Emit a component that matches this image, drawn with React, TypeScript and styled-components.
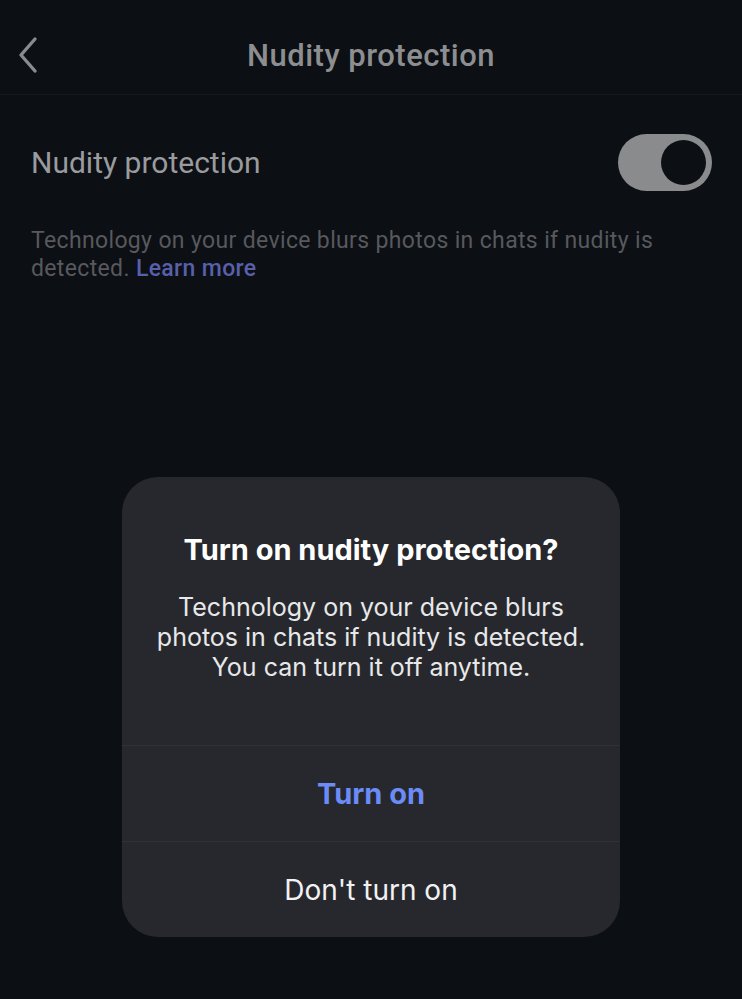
import React from "react";
import styled, { createGlobalStyle } from "styled-components";

const GlobalStyle = createGlobalStyle`
  html, body {
    margin: 0;
    padding: 0;
    background: #0c0f14;
  }
  body {
    font-family: Inter, "Noto Sans", sans-serif;
    -webkit-font-smoothing: antialiased;
  }
`;

const Screen = styled.div`
  position: relative;
  width: 742px;
  height: 999px;
  background: #0c0f14;
  overflow: hidden;
`;

const Header = styled.header`
  height: 95px;
  display: flex;
  align-items: center;
  justify-content: center;
  position: relative;
  padding-top: 16px;
  border-bottom: 1px solid #15181d;
  box-sizing: border-box;
`;

const BackButton = styled.button`
  position: absolute;
  left: 14px;
  top: 36px;
  width: 28px;
  height: 38px;
  padding: 0;
  border: none;
  background: none;
  display: flex;
  align-items: center;
  justify-content: center;
`;

const Title = styled.h1`
  margin: 0;
  font-family: Roboto, "Noto Sans", sans-serif;
  font-size: 31px;
  font-weight: 500;
  color: #8d8e90;
  letter-spacing: 0.5px;
`;

const Content = styled.div`
  padding: 39px 30px 0 31px;
`;

const SettingRow = styled.div`
  display: flex;
  align-items: center;
  justify-content: space-between;
  height: 57px;
`;

const SettingLabel = styled.span`
  font-family: Roboto, "Noto Sans", sans-serif;
  font-size: 30px;
  font-weight: 400;
  color: #9a9b9e;
`;

const Toggle = styled.div`
  width: 94px;
  height: 57px;
  border-radius: 29px;
  background: #8a8b8d;
  display: flex;
  align-items: center;
  justify-content: flex-end;
  padding-right: 6px;
  box-sizing: border-box;
`;

const Knob = styled.div`
  width: 45px;
  height: 45px;
  border-radius: 50%;
  background: #0c0f14;
`;

const Description = styled.p`
  margin: 36px 0 0;
  font-family: Roboto, "Noto Sans", sans-serif;
  font-size: 23px;
  line-height: 28px;
  letter-spacing: 0.35px;
  color: #57595d;
`;

const LearnMore = styled.a`
  color: #5860ab;
  font-weight: 500;
  text-decoration: none;
`;

const Dialog = styled.div`
  position: absolute;
  left: 122px;
  top: 477px;
  width: 498px;
  height: 460px;
  background: #26282d;
  border-radius: 36px;
  display: flex;
  flex-direction: column;
  overflow: hidden;
`;

const DialogBody = styled.div`
  flex: 1;
  display: flex;
  flex-direction: column;
  align-items: center;
  padding: 55px 16px 0;
  text-align: center;
`;

const DialogTitle = styled.h2`
  margin: 0;
  font-size: 29px;
  line-height: 35px;
  font-weight: 700;
  color: #ffffff;
  letter-spacing: 0;
`;

const DialogText = styled.p`
  margin: 25px 0 0;
  font-size: 25px;
  line-height: 30px;
  color: #e8e8ea;
  font-weight: 400;
`;

const DialogButton = styled.button<{ $primary?: boolean }>`
  height: 96px;
  border: none;
  border-top: 1px solid #303238;
  background: none;
  font-family: Inter, "Noto Sans", sans-serif;
  font-size: ${(p) => (p.$primary ? "29px" : "28px")};
  font-weight: ${(p) => (p.$primary ? 700 : 400)};
  color: ${(p) => (p.$primary ? "#6b8cf6" : "#f2f2f4")};
  padding: 0;
  cursor: pointer;
`;

export default function App() {
  return (
    <Screen>
      <GlobalStyle />
      <Header>
        <BackButton aria-label="Back">
          <svg width="24" height="38" viewBox="0 0 24 38" fill="none">
            <path
              d="M19 3 L5 19 L19 35"
              stroke="#8a8b8d"
              strokeWidth="3.4"
              strokeLinecap="round"
              strokeLinejoin="round"
            />
          </svg>
        </BackButton>
        <Title>Nudity protection</Title>
      </Header>
      <Content>
        <SettingRow>
          <SettingLabel>Nudity protection</SettingLabel>
          <Toggle>
            <Knob />
          </Toggle>
        </SettingRow>
        <Description>
          Technology on your device blurs photos in chats if nudity is
          detected. <LearnMore href="#">Learn more</LearnMore>
        </Description>
      </Content>
      <Dialog>
        <DialogBody>
          <DialogTitle>Turn on nudity protection?</DialogTitle>
          <DialogText>
            Technology on your device blurs
            <br />
            photos in chats if nudity is detected.
            <br />
            You can turn it off anytime.
          </DialogText>
        </DialogBody>
        <DialogButton $primary>Turn on</DialogButton>
        <DialogButton>Don't turn on</DialogButton>
      </Dialog>
    </Screen>
  );
}
